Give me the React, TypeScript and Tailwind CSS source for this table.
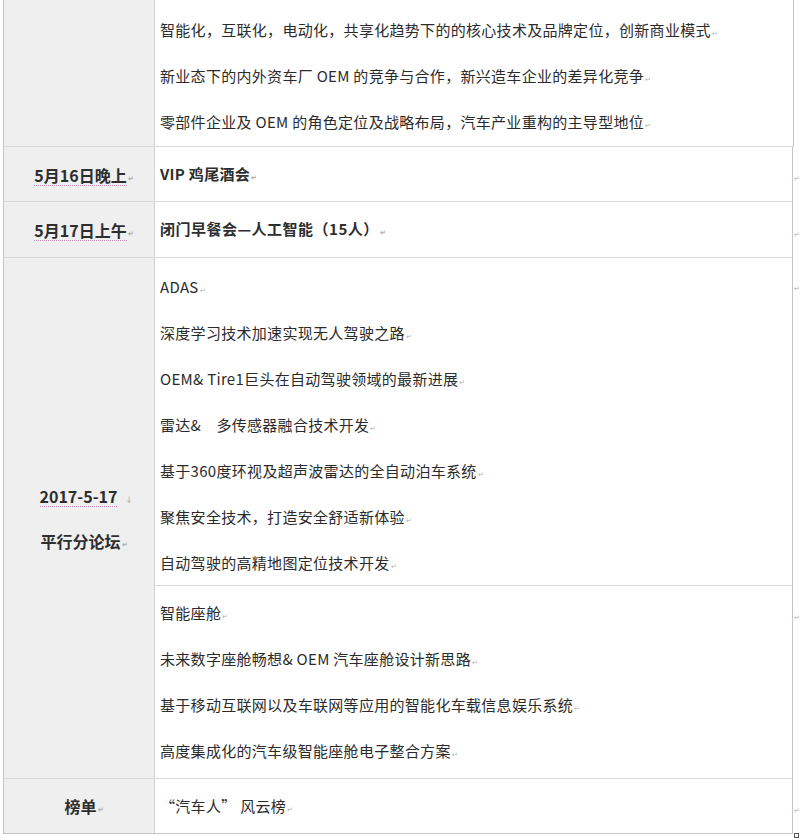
import React from "react";

const FONT = { fontFamily: '"Noto Sans CJK SC", "Noto Sans", sans-serif' };

const Mark = () => (
  <span className="ml-[1px] inline-block translate-y-[3px] text-[7px] leading-none text-[#b0b0b0]">↵</span>
);

const Line = ({ children }: { children: React.ReactNode }) => (
  <div className="flex h-[46px] items-center whitespace-pre text-[15px] tracking-[0.3px] text-[#2b2b2b]">
    {children}
    <Mark />
  </div>
);

const LeftLabel = ({ children, underline = false }: { children: React.ReactNode; underline?: boolean }) => (
  <div className="flex items-center justify-center text-[16px] font-bold text-[#2e2e2e]">
    <span className={underline ? "border-b border-dotted border-[#cf8fc0] leading-[20px]" : ""}>{children}</span>
    <Mark />
  </div>
);

const OuterMark = () => <span className="text-[7px] leading-none text-[#b0b0b0]">↵</span>;

export default function App() {
  return (
    <div className="min-h-[840px] w-[800px] bg-white" style={FONT}>
      <div className="ml-[3px] flex flex-col">
        {/* Row 1 */}
        <div className="flex">
          <div className="flex h-[147px] w-[791px] border-x border-b border-x-[#c4c4c4] border-b-[#dadada]">
            <div className="w-[151px] shrink-0 border-r border-[#d3d3d3] bg-[#efefef]" />
            <div className="flex-1 bg-white pl-[5px] pt-[7px]">
              <Line>智能化，互联化，电动化，共享化趋势下的的核心技术及品牌定位，创新商业模式</Line>
              <Line>新业态下的内外资车厂 OEM 的竞争与合作，新兴造车企业的差异化竞争</Line>
              <Line>零部件企业及 OEM 的角色定位及战略布局，汽车产业重构的主导型地位</Line>
            </div>
          </div>
        </div>

        {/* Row 2 */}
        <div className="flex">
          <div className="flex h-[55px] w-[791px] border-x border-b border-x-[#c4c4c4] border-b-[#dadada]">
            <div className="flex w-[151px] shrink-0 items-center justify-center border-r border-[#d3d3d3] bg-[#efefef] pl-[10px] pt-[2px]">
              <LeftLabel underline>5月16日晚上</LeftLabel>
            </div>
            <div className="flex flex-1 items-center bg-white pl-[5px] text-[15px] font-bold tracking-[0.3px] text-[#2e2e2e]">
              VIP 鸡尾酒会
              <Mark />
            </div>
          </div>
          <div className="flex items-center pl-[1px] pt-[8px]">
            <OuterMark />
          </div>
        </div>

        {/* Row 3 */}
        <div className="flex">
          <div className="flex h-[56px] w-[791px] border-x border-b border-x-[#c4c4c4] border-b-[#dadada]">
            <div className="flex w-[151px] shrink-0 items-center justify-center border-r border-[#d3d3d3] bg-[#efefef] pl-[10px] pt-[2px]">
              <LeftLabel underline>5月17日上午</LeftLabel>
            </div>
            <div className="flex flex-1 items-center whitespace-pre bg-white pl-[5px] text-[15px] font-bold tracking-[0.5px] text-[#2e2e2e]">
              闭门早餐会—人工智能（15人）
              <Mark />
            </div>
          </div>
          <div className="flex items-center pl-[1px] pt-[8px]">
            <OuterMark />
          </div>
        </div>

        {/* Row 4 */}
        <div className="flex">
          <div className="flex h-[521px] w-[791px] border-x border-b border-x-[#c4c4c4] border-b-[#dadada]">
            <div className="flex w-[151px] shrink-0 flex-col items-center justify-center gap-[22px] border-r border-[#d3d3d3] bg-[#efefef] pl-[10px] pt-[3px]">
              <div className="flex items-center pl-[4px] text-[16px] font-bold text-[#2e2e2e]">
                <span className="border-b border-dotted border-[#cf8fc0] leading-[20px]">2017-5-17</span>
                <span className="ml-[8px] translate-y-[3px] text-[7px] leading-none text-[#b0b0b0]">↓</span>
              </div>
              <LeftLabel>平行分论坛</LeftLabel>
            </div>
            <div className="flex flex-1 flex-col bg-white">
              <div className="h-[328px] border-b border-[#dadada] pl-[5px] pt-[6px]">
                <Line>ADAS</Line>
                <Line>深度学习技术加速实现无人驾驶之路</Line>
                <Line>OEM&amp; Tire1巨头在自动驾驶领域的最新进展</Line>
                <Line>雷达&amp;　多传感器融合技术开发</Line>
                <Line>基于360度环视及超声波雷达的全自动泊车系统</Line>
                <Line>聚焦安全技术，打造安全舒适新体验</Line>
                <Line>自动驾驶的高精地图定位技术开发</Line>
              </div>
              <div className="flex-1 pl-[5px] pt-[4px]">
                <Line>智能座舱</Line>
                <Line>未来数字座舱畅想&amp; OEM 汽车座舱设计新思路</Line>
                <Line>基于移动互联网以及车联网等应用的智能化车载信息娱乐系统</Line>
                <Line>高度集成化的汽车级智能座舱电子整合方案</Line>
              </div>
            </div>
          </div>
          <div className="flex flex-col pl-[1px]">
            <div className="h-[27px]" />
            <OuterMark />
            <div className="h-[322px]" />
            <OuterMark />
          </div>
        </div>

        {/* Row 5 */}
        <div className="flex">
          <div className="flex h-[55px] w-[791px] border-x border-b border-x-[#c4c4c4] border-b-[#c4c4c4]">
            <div className="flex w-[151px] shrink-0 items-center justify-center border-r border-[#d3d3d3] bg-[#efefef] pl-[10px]">
              <LeftLabel>榜单</LeftLabel>
            </div>
            <div className="flex flex-1 items-center whitespace-pre bg-white pl-[5px] text-[15px] tracking-[0.3px] text-[#2b2b2b]">
              “汽车人” 风云榜
              <Mark />
            </div>
          </div>
          <div className="flex flex-col justify-between pl-[1px] pt-[28px]">
            <OuterMark />
            <span className="mb-[-4px] inline-block h-[5px] w-[5px] border border-[#555]" />
          </div>
        </div>
      </div>
    </div>
  );
}
